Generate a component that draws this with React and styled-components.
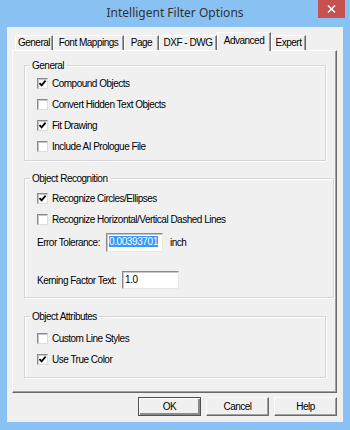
import React from "react";
import styled, {createGlobalStyle} from "styled-components";

const GlobalStyle = createGlobalStyle`
  html, body {
    margin: 0;
    padding: 0;
    background: #ffffff;
  }
  body {
    font-family: "Liberation Sans", Arial, sans-serif;
    font-size: 10px;
    color: #000;
  }
`;

const UI_FONT = `"Liberation Sans", Arial, sans-serif`;

const Window = styled.div`
  width: 350px;
  height: 430px;
  box-sizing: border-box;
  background: #89c1f2;
  padding: 0 7px 8px 7px;
  display: flex;
  flex-direction: column;
`;

const TitleBar = styled.div`
  height: 27px;
  margin: 0 -7px;
  display: grid;
  grid-template-columns: 1fr auto 1fr;
  align-items: start;
`;

const Title = styled.div`
  grid-column: 2;
  font-family: "Noto Sans", "Open Sans", sans-serif;
  font-size: 12px;
  line-height: 26px;
  color: #333333;
`;

const CloseButton = styled.div`
  grid-column: 3;
  justify-self: end;
  width: 27px;
  height: 18px;
  margin-right: 5px;
  background: #c75050;
  display: flex;
  align-items: center;
  justify-content: center;
`;

const Client = styled.div`
  flex: 1;
  background: #f0f0f0;
  padding: 5px 6px 6px 5px;
  display: flex;
  flex-direction: column;
  font-family: ${UI_FONT};
  font-size: 10px;
  letter-spacing: -0.5px;
`;

const TabRow = styled.div`
  display: flex;
  align-items: flex-end;
  padding-left: 3px;
  height: 18px;
`;

const Tab = styled.div`
  box-sizing: border-box;
  width: ${(p) => p.$w}px;
  height: ${(p) => (p.$active ? "19px" : "15px")};
  margin-bottom: ${(p) => (p.$active ? "-1px" : "0")};
  padding-top: ${(p) => (p.$active ? "2px" : "1px")};
  line-height: 12px;
  text-align: center;
  border-top: 1px solid #ffffff;
  border-left: 1px solid #ffffff;
  border-right: 1px solid #696969;
  box-shadow: inset -1px 0 0 #a0a0a0;
  background: #f0f0f0;
  position: relative;
  z-index: ${(p) => (p.$active ? 1 : 0)};
  white-space: nowrap;
`;

const Panel = styled.div`
  box-sizing: border-box;
  height: 343px;
  border-top: 1px solid #ffffff;
  border-left: 1px solid #ffffff;
  border-right: 1px solid #696969;
  border-bottom: 1px solid #696969;
  box-shadow: inset -1px -1px 0 #a0a0a0;
  padding: 8px 0 0 11px;
  display: flex;
  flex-direction: column;
  align-items: flex-start;
`;

const Group = styled.fieldset`
  box-sizing: border-box;
  width: ${(p) => p.$width}px;
  margin: ${(p) => p.$top}px 0 0 0;
  padding: ${(p) => p.$pad};
  border: 1px solid #d5d5d5;
  box-shadow: 1px 1px 0 #ffffff, inset 1px 1px 0 #ffffff;
  min-width: 0;
`;

const Legend = styled.legend`
  line-height: 13px;
  padding: 0 2px;
  margin-left: -7px;
`;

const CheckRow = styled.div`
  height: 21px;
  display: flex;
  align-items: center;
  gap: 4px;
`;

const Box = styled.span`
  box-sizing: border-box;
  width: 11px;
  height: 11px;
  background: #ffffff;
  border: 1px solid;
  border-color: #8a8a8a #dcdcdc #dcdcdc #8a8a8a;
  box-shadow: inset 1px 1px 0 #c8c8c8;
  display: flex;
  align-items: center;
  justify-content: center;
  flex: none;
`;

const FieldRow = styled.div`
  height: ${(p) => p.$h}px;
  margin-top: ${(p) => p.$top}px;
  display: flex;
  align-items: center;
`;

const FieldLabel = styled.span`
  width: ${(p) => p.$w}px;
  flex: none;
`;

const TextBox = styled.div`
  box-sizing: border-box;
  width: 57px;
  height: ${(p) => p.$h}px;
  background: #ffffff;
  border: 1px solid;
  border-color: #8a8a8a #e8e8e8 #e8e8e8 #8a8a8a;
  box-shadow: inset 1px 1px 0 #c8c8c8;
  padding: 2px 0 0 2px;
  line-height: 12px;
  font-size: 10px;
  letter-spacing: -0.4px;
`;

const Selected = styled.span`
  background: #3399ff;
  color: #ffffff;
`;

const Unit = styled.span`
  margin-left: 7px;
`;

const ButtonRow = styled.div`
  margin-top: 4px;
  display: flex;
  justify-content: flex-end;
  gap: 5px;
`;

const Button = styled.div`
  box-sizing: border-box;
  width: 63px;
  height: 19px;
  display: flex;
  align-items: center;
  justify-content: center;
  background: #f0f0f0;
  border: 1px solid;
  border-color: ${(p) => (p.$default ? "#505050" : "#ffffff #696969 #696969 #ffffff")};
  box-shadow: ${(p) =>
    p.$default
      ? "inset 1px 1px 0 #ffffff, inset -2px -2px 0 #8a8a8a"
      : "inset -1px -1px 0 #a0a0a0"};
`;

const Check = ({checked, children}) => (
  <CheckRow>
    <Box>
      {checked && (
        <svg width="9" height="9" viewBox="0 0 9 9">
          <path d="M1.5 4.2 L3.6 6.4 L7.6 1.6" fill="none" stroke="#000" strokeWidth="1.8" />
        </svg>
      )}
    </Box>
    <span>{children}</span>
  </CheckRow>
);

const tabs = [
  {label: "General", w: 38},
  {label: "Font Mappings", w: 71},
  {label: "Page", w: 35},
  {label: "DXF - DWG", w: 58},
  {label: "Advanced", w: 54},
  {label: "Expert", w: 35},
];

export default function App() {
  return (
    <>
      <GlobalStyle />
      <Window>
        <TitleBar>
          <Title>Intelligent Filter Options</Title>
          <CloseButton>
            <svg width="9" height="8" viewBox="0 0 9 8">
              <path d="M1 0.5 L8 7.5 M8 0.5 L1 7.5" stroke="#fff" strokeWidth="1.5" />
            </svg>
          </CloseButton>
        </TitleBar>
        <Client>
          <TabRow>
            {tabs.map((t) => (
              <Tab key={t.label} $w={t.w} $active={t.label === "Advanced"}>
                {t.label}
              </Tab>
            ))}
          </TabRow>
          <Panel>
            <Group $width={302} $top={0} $pad="1px 12px 3px 12px">
              <Legend>General</Legend>
              <Check checked>Compound Objects</Check>
              <Check>Convert Hidden Text Objects</Check>
              <Check checked>Fit Drawing</Check>
              <Check>Include AI Prologue File</Check>
            </Group>
            <Group $width={310} $top={11} $pad="3px 12px 8px 12px">
              <Legend>Object Recognition</Legend>
              <Check checked>Recognize Circles/Ellipses</Check>
              <Check>Recognize Horizontal/Vertical Dashed Lines</Check>
              <FieldRow $h={19} $top={3}>
                <FieldLabel $w={69}>Error Tolerance:</FieldLabel>
                <TextBox $h={19}>
                  <Selected>0.00393701</Selected>
                </TextBox>
                <Unit>inch</Unit>
              </FieldRow>
              <FieldRow $h={18} $top={19}>
                <FieldLabel $w={85}>Kerning Factor Text:</FieldLabel>
                <TextBox $h={18}>1.0</TextBox>
              </FieldRow>
            </Group>
            <Group $width={302} $top={12} $pad="5px 12px 7px 12px">
              <Legend>Object Attributes</Legend>
              <Check>Custom Line Styles</Check>
              <Check checked>Use True Color</Check>
            </Group>
          </Panel>
          <ButtonRow>
            <Button $default>OK</Button>
            <Button>Cancel</Button>
            <Button>Help</Button>
          </ButtonRow>
        </Client>
      </Window>
    </>
  );
}
